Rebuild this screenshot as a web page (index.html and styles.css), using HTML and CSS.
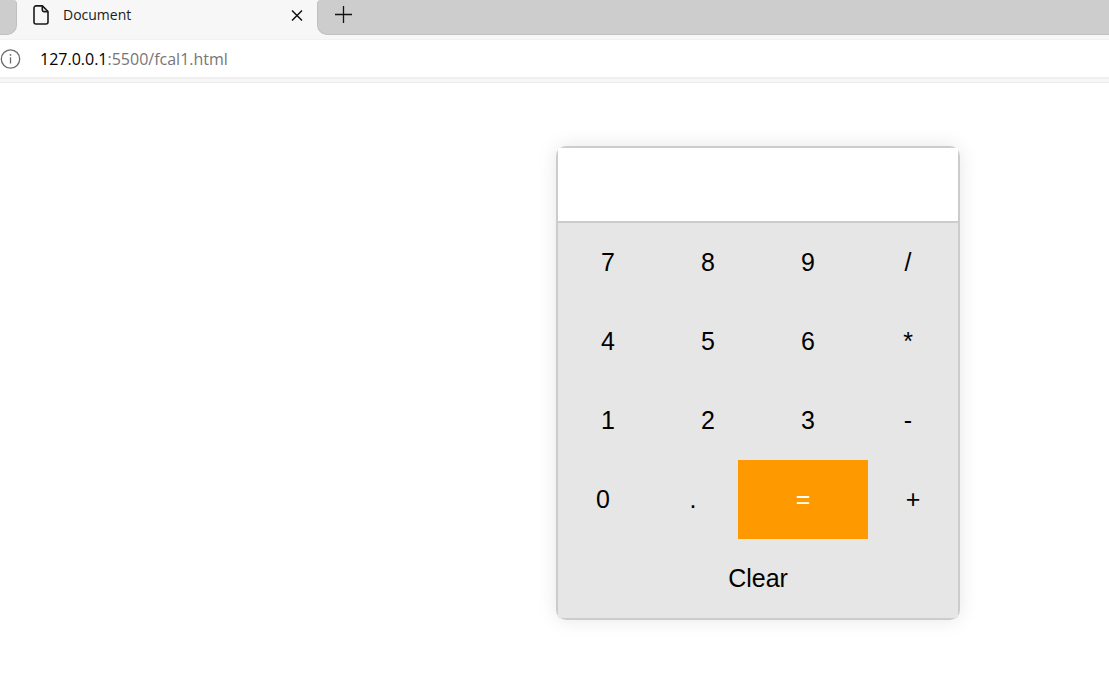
FILE: index.html
```html
<!DOCTYPE html>
<html lang="en">
<head>
<meta charset="utf-8">
<title>Document</title>
<link rel="stylesheet" href="styles.css">
</head>
<body>
<header class="browser">
  <div class="tabs">
    <div class="strip strip-left"></div>
    <div class="tab">
      <svg class="page-icon" width="16" height="20" viewBox="0 0 16 20" fill="none" stroke="#1b1b1b" stroke-width="1.6" stroke-linejoin="round"><path d="M3 .9H9.4L15 6.5V17A2 2 0 0 1 13 19H3A2 2 0 0 1 1 17V2.9A2 2 0 0 1 3 .9Z"/><path d="M9.3 1V5A1.6 1.6 0 0 0 10.9 6.6H15"/></svg>
      <span class="tab-title">Document</span>
      <button class="icon-button" type="button" aria-label="Close tab"><svg width="12" height="12" viewBox="0 0 12 12" stroke="#111" stroke-width="1.5"><path d="M1 1.5L11 11.5M11 1.5L1 11.5"/></svg></button>
    </div>
    <div class="strip strip-right">
      <button class="icon-button" type="button" aria-label="New tab"><svg width="18" height="18" viewBox="0 0 18 18" stroke="#111" stroke-width="1.3"><path d="M8.5 0V17M0 8.5H17"/></svg></button>
    </div>
  </div>
  <div class="address">
    <svg width="21" height="20" viewBox="0 0 21 20" fill="none" stroke="#6b6b6b" stroke-width="1.3"><circle cx="10.5" cy="10" r="9.2"/><path d="M10.5 8.3V14.5"/><circle cx="10.5" cy="5.9" r=".9" fill="#6b6b6b" stroke="none"/></svg>
    <span class="url"><span class="host">127.0.0.1</span>:5500/fcal1.html</span>
  </div>
  <div class="edge"></div>
</header>
<main class="page">
  <form class="calculator">
    <input class="display" type="text" aria-label="Result" readonly>
    <div class="row">
      <button class="key" type="button">7</button><button class="key" type="button">8</button><button class="key" type="button">9</button><button class="key" type="button">/</button>
    </div>
    <div class="row">
      <button class="key" type="button">4</button><button class="key" type="button">5</button><button class="key" type="button">6</button><button class="key" type="button">*</button>
    </div>
    <div class="row">
      <button class="key" type="button">1</button><button class="key" type="button">2</button><button class="key" type="button">3</button><button class="key" type="button">-</button>
    </div>
    <div class="row">
      <button class="key" type="button">0</button><button class="key" type="button">.</button><button class="key equals" type="button">=</button><button class="key" type="button">+</button>
    </div>
    <div class="row">
      <button class="key" type="button">Clear</button>
    </div>
  </form>
</main>
</body>
</html>
```
FILE: styles.css
```css
* {
  box-sizing: border-box;
}

body {
  margin: 0;
  background: #fff;
  font-family: "Liberation Sans", Arial, sans-serif;
}

button {
  border: 0;
  padding: 0;
  background: none;
  color: #000;
  font: inherit;
}

.browser {
  background: #f7f7f7;
  font-family: "Open Sans", "Noto Sans", sans-serif;
}

.tabs {
  display: flex;
  height: 40px;
  padding-bottom: 4px;
  border-bottom: 1px solid #f2f2f2;
}

.strip {
  background: #cdcdcd;
  border-bottom: 1px solid #c0c0c0;
}

.strip-left {
  width: 17px;
  border-right: 1px solid #c0c0c0;
  border-radius: 0 4px 10px 0;
}

.strip-right {
  flex: 1;
  padding: 6px 17px;
  border-left: 1px solid #c0c0c0;
  border-radius: 4px 0 0 10px;
}

.tab {
  display: flex;
  align-items: center;
  width: 300px;
  height: 30px;
  padding: 0 14px 0 16px;
}

.tab-title {
  flex: 1;
  margin-left: 14px;
  color: #1b1b1b;
  font-size: 14px;
  line-height: 30px;
}

.icon-button {
  display: flex;
}

.address {
  display: flex;
  align-items: center;
  gap: 19px;
  height: 37px;
  background: #fff;
}

.url {
  color: #767676;
  font-size: 16px;
  line-height: 36px;
}

.host {
  color: #000;
}

.edge {
  height: 6px;
  border-top: 2px solid #efefef;
  border-bottom: 1px solid #ececec;
}

.page {
  display: flex;
  justify-content: flex-end;
  padding: 63px 149px 76px 16px;
}

.calculator {
  width: 404px;
  border: 2px solid #ccc;
  border-radius: 10px;
  box-shadow: 0 0 20px rgba(0, 0, 0, 0.1);
}

.display {
  display: block;
  width: 100%;
  height: 75px;
  padding: 0 20px;
  border: 0;
  border-bottom: 2px solid #ccc;
  outline: 0;
  background: #fff;
  font: 25px "Liberation Sans", Arial, sans-serif;
  text-align: right;
}

.row {
  display: flex;
  background: #e6e6e6;
}

.key {
  flex: 1;
  padding: 25px 0;
  font-size: 25px;
  line-height: 29px;
}

.equals {
  flex: 0 0 130px;
  background: #ff9900;
  color: #fff;
}
```
